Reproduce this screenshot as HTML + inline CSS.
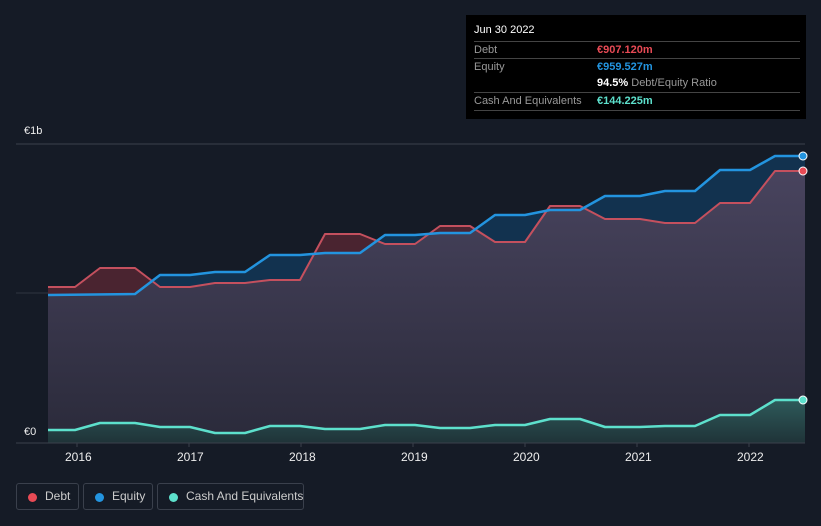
<!DOCTYPE html>
<html><head><meta charset="utf-8"><style>
html,body{margin:0;height:526px}
body{background:#151b26;width:821px;overflow:hidden;font-family:"Liberation Sans",sans-serif;position:relative}
.tt{position:absolute;left:466px;top:15px;width:340px;height:104px;background:#000;color:#fff;font-size:11px}
.tt .r{position:absolute;left:8px;right:6px;height:17px;border-top:1px solid #444;line-height:17px;color:#999}
.tt .v{position:absolute;left:123px;font-weight:bold}
.leg{position:absolute;top:483px;height:27px;border:1px solid #3a404c;border-radius:3px;color:#ccc;font-size:12px;line-height:25px;box-sizing:border-box;white-space:nowrap}
.leg i{position:absolute;left:11px;top:9px;width:9px;height:9px;border-radius:50%}
.leg span{position:absolute;left:28px}
.yr{position:absolute;top:450px;color:#eee;font-size:12px}
</style></head><body>
<svg width="821" height="526" style="position:absolute;left:0;top:0">
<defs>
<clipPath id="dc"><path d="M48,443 L48,287 L75,287 L100,268 L135,268 L160,287 L190,287 L215,283 L245,283 L270,280 L300,280 L325,234 L360,234 L385,244 L415,244 L440,226 L470,226 L495,242 L525,242 L550,206 L580,206 L605,219 L640,219 L665,223 L695,223 L720,203 L750,203 L775,171 L805,171 L805,443Z"/></clipPath>
<linearGradient id="cg" x1="0" y1="0" x2="0" y2="1"><stop offset="0" stop-color="#2e5a5a"/><stop offset="1" stop-color="#1f3338"/></linearGradient>
<linearGradient id="pg" x1="0" y1="0" x2="0" y2="1"><stop offset="0" stop-color="#4a4560"/><stop offset="1" stop-color="#2a2a3a"/></linearGradient>
</defs>
<line x1="16" y1="144" x2="805" y2="144" stroke="#3a404c"/>
<line x1="16" y1="293" x2="805" y2="293" stroke="#2e3440"/>
<path fill="#12324f" d="M48,443 L48,295 L135,294 L160,275 L190,275 L215,272 L245,272 L270,255 L300,255 L325,253 L360,253 L385,235 L415,235 L440,233 L470,233 L495,215 L525,215 L550,210 L580,210 L605,196 L640,196 L665,191 L695,191 L720,170 L750,170 L775,156 L805,156 L805,443Z"/>
<path fill="#4a2430" d="M48,443 L48,287 L75,287 L100,268 L135,268 L160,287 L190,287 L215,283 L245,283 L270,280 L300,280 L325,234 L360,234 L385,244 L415,244 L440,226 L470,226 L495,242 L525,242 L550,206 L580,206 L605,219 L640,219 L665,223 L695,223 L720,203 L750,203 L775,171 L805,171 L805,443Z"/>
<path clip-path="url(#dc)" fill="url(#pg)" d="M48,443 L48,295 L135,294 L160,275 L190,275 L215,272 L245,272 L270,255 L300,255 L325,253 L360,253 L385,235 L415,235 L440,233 L470,233 L495,215 L525,215 L550,210 L580,210 L605,196 L640,196 L665,191 L695,191 L720,170 L750,170 L775,156 L805,156 L805,443Z"/>
<path fill="url(#cg)" d="M48,443 L48,430 L75,430 L100,423 L135,423 L160,427 L190,427 L215,433 L245,433 L270,426 L300,426 L325,429 L360,429 L385,425 L415,425 L440,428 L470,428 L495,425 L525,425 L550,419 L580,419 L605,427 L640,427 L665,426 L695,426 L720,415 L750,415 L775,400 L805,400 L805,443Z"/>
<path fill="none" stroke="#c4505e" stroke-width="2" stroke-linejoin="round" d="M48,287 L75,287 L100,268 L135,268 L160,287 L190,287 L215,283 L245,283 L270,280 L300,280 L325,234 L360,234 L385,244 L415,244 L440,226 L470,226 L495,242 L525,242 L550,206 L580,206 L605,219 L640,219 L665,223 L695,223 L720,203 L750,203 L775,171 L805,171"/>
<path fill="none" stroke="#2394df" stroke-width="2.5" stroke-linejoin="round" d="M48,295 L135,294 L160,275 L190,275 L215,272 L245,272 L270,255 L300,255 L325,253 L360,253 L385,235 L415,235 L440,233 L470,233 L495,215 L525,215 L550,210 L580,210 L605,196 L640,196 L665,191 L695,191 L720,170 L750,170 L775,156 L805,156"/>
<path fill="none" stroke="#5de0cc" stroke-width="2.5" stroke-linejoin="round" d="M48,430 L75,430 L100,423 L135,423 L160,427 L190,427 L215,433 L245,433 L270,426 L300,426 L325,429 L360,429 L385,425 L415,425 L440,428 L470,428 L495,425 L525,425 L550,419 L580,419 L605,427 L640,427 L665,426 L695,426 L720,415 L750,415 L775,400 L805,400"/>
<line x1="16" y1="443" x2="805" y2="443" stroke="#3a404c"/>
<g stroke="#3a404c"><line x1="77" y1="443" x2="77" y2="447"/><line x1="189" y1="443" x2="189" y2="447"/><line x1="301" y1="443" x2="301" y2="447"/><line x1="413" y1="443" x2="413" y2="447"/><line x1="525" y1="443" x2="525" y2="447"/><line x1="637" y1="443" x2="637" y2="447"/><line x1="749" y1="443" x2="749" y2="447"/></g>
<circle cx="803" cy="156" r="4" fill="#2394df" stroke="#fff" stroke-width="1"/>
<circle cx="803" cy="171" r="4" fill="#e84a55" stroke="#fff" stroke-width="1"/>
<circle cx="803" cy="400" r="4" fill="#5de0cc" stroke="#fff" stroke-width="1"/>
</svg>
<div style="position:absolute;left:24px;top:125px;color:#eee;font-size:11px">€1b</div>
<div style="position:absolute;left:16px;top:424px;width:32px;height:18px;background:#151b26;color:#eee;font-size:11px;line-height:16px;padding-left:8px;box-sizing:border-box">€0</div>
<div class="yr" style="left:65px">2016</div><div class="yr" style="left:177px">2017</div><div class="yr" style="left:289px">2018</div><div class="yr" style="left:401px">2019</div><div class="yr" style="left:513px">2020</div><div class="yr" style="left:625px">2021</div><div class="yr" style="left:737px">2022</div>
<div class="tt">
<div style="position:absolute;left:8px;top:9px;font-size:11px">Jun 30 2022</div>
<div class="r" style="top:26px">Debt<span class="v" style="color:#e84a55">€907.120m</span></div>
<div class="r" style="top:43px">Equity<span class="v" style="color:#2394df">€959.527m</span></div>
<div class="r" style="top:60px;border-top:none"><span class="v" style="color:#fff">94.5% <span style="color:#999;font-weight:normal">Debt/Equity Ratio</span></span></div>
<div class="r" style="top:77px">Cash And Equivalents<span class="v" style="color:#5de0cc">€144.225m</span></div>
<div class="r" style="top:95px;height:0"></div>
</div>
<div class="leg" style="left:16px;width:63px"><i style="background:#e84a55"></i><span>Debt</span></div>
<div class="leg" style="left:83px;width:70px"><i style="background:#2394df"></i><span>Equity</span></div>
<div class="leg" style="left:157px;width:147px"><i style="background:#5de0cc"></i><span>Cash And Equivalents</span></div>
</body></html>
